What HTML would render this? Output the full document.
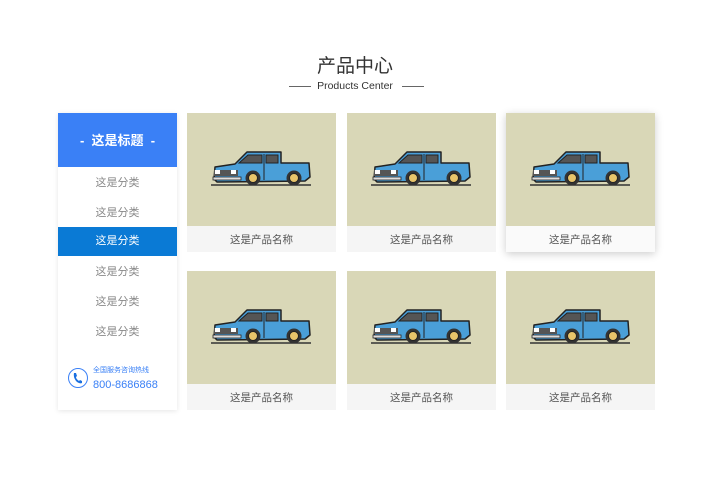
<!DOCTYPE html>
<html><head><meta charset="utf-8"><style>
body{margin:0;width:710px;height:501px;background:#fff;font-family:"Liberation Sans","Noto Sans CJK SC",sans-serif;position:relative;overflow:hidden}
.t{position:absolute;left:0;width:710px;text-align:center;top:55px;font-size:19px;color:#333;line-height:24px}
.st{position:absolute;left:0;width:710px;text-align:center;top:78px;font-size:10.5px;color:#333;line-height:16px}
.ln{position:absolute;top:86px;height:1px;width:22px;background:#666}
.side{position:absolute;left:58px;top:113px;width:119px;height:297px;background:#fff;box-shadow:0 1px 5px rgba(0,0,0,.1)}
.hd{height:54px;background:#3a80f6;color:#fff;font-size:13px;font-weight:bold;text-align:center;line-height:56px}
.it{height:30px;line-height:32px;text-align:center;font-size:11px;color:#888}
.it.a{background:#0a7ad5;color:#fff;height:29px;line-height:29px}
.card{position:absolute;width:149px;height:139px;background:#f5f5f5}
.card .im{height:113px;background:#d9d7b7}
.card .lb{height:26px;line-height:28px;text-align:center;font-size:10.5px;color:#555}
.sh{box-shadow:0 2px 8px rgba(0,0,0,.2)}
</style></head><body>
<svg width="0" height="0" style="position:absolute"><defs><g id="tr">
<line x1="24" y1="72" x2="124" y2="72" stroke="#333" stroke-width="1.5"/>
<path d="M28 54 L48 51 L60 39 L94 39 L94 50 L122 50 L123 64 L118 68 L30 69 L27 66Z" fill="#4a9fd8" stroke="#222" stroke-width="1.5" stroke-linejoin="round"/>
<path d="M52 50 L61 42 L75 42 L75 50Z" fill="#555" stroke="#222" stroke-width="1"/>
<path d="M79 42 L91 42 L91 50 L79 50Z" fill="#555" stroke="#222" stroke-width="1"/>
<line x1="77" y1="41" x2="77" y2="67" stroke="#222" stroke-width="1"/>
<rect x="27" y="57" width="24" height="6" fill="#555"/>
<rect x="28" y="57" width="5" height="4" fill="#fff"/><rect x="44" y="57" width="5" height="4" fill="#fff"/>
<rect x="26" y="64" width="28" height="3" fill="#ddd" stroke="#222" stroke-width=".8"/>
<circle cx="66" cy="65" r="7.5" fill="#333"/><circle cx="66" cy="65" r="4.5" fill="#e8c46a" stroke="#222" stroke-width="1"/>
<circle cx="107" cy="65" r="7.5" fill="#333"/><circle cx="107" cy="65" r="4.5" fill="#e8c46a" stroke="#222" stroke-width="1"/>
</g></defs></svg>
<div class="t">产品中心</div>
<div class="ln" style="left:289px"></div><div class="ln" style="left:402px"></div>
<div class="st">Products Center</div>
<div class="side">
<div class="hd">-&nbsp; 这是标题 &nbsp;-</div>
<div class="it">这是分类</div><div class="it">这是分类</div>
<div class="it a">这是分类</div>
<div class="it">这是分类</div><div class="it">这是分类</div><div class="it">这是分类</div>
<svg style="position:absolute;left:9px;top:254px" width="22" height="22"><circle cx="11" cy="11" r="9.5" fill="none" stroke="#3a80f6" stroke-width="1"/><path d="M7 6 Q6 11 10 15 Q13 17 15 16 L15 14 L13 13 L12 14 Q9 12 9 10 L10 9 L9 6Z" fill="#1a6fe0"/></svg>
<div style="position:absolute;left:35px;top:252px;font-size:7px;color:#3a80f6">全国服务咨询热线</div>
<div style="position:absolute;left:35px;top:266px;font-size:11px;color:#3a80f6">800-8686868</div>
</div>
<div class="card" style="left:187px;top:113px"><div class="im"><svg width="149" height="113"><use href="#tr"/></svg></div><div class="lb">这是产品名称</div></div>
<div class="card" style="left:347px;top:113px"><div class="im"><svg width="149" height="113"><use href="#tr"/></svg></div><div class="lb">这是产品名称</div></div>
<div class="card sh" style="left:506px;top:113px"><div class="im"><svg width="149" height="113"><use href="#tr"/></svg></div><div class="lb" style="background:#fafafa">这是产品名称</div></div>
<div class="card" style="left:187px;top:271px"><div class="im"><svg width="149" height="113"><use href="#tr"/></svg></div><div class="lb">这是产品名称</div></div>
<div class="card" style="left:347px;top:271px"><div class="im"><svg width="149" height="113"><use href="#tr"/></svg></div><div class="lb">这是产品名称</div></div>
<div class="card" style="left:506px;top:271px"><div class="im"><svg width="149" height="113"><use href="#tr"/></svg></div><div class="lb">这是产品名称</div></div>
</body></html>
